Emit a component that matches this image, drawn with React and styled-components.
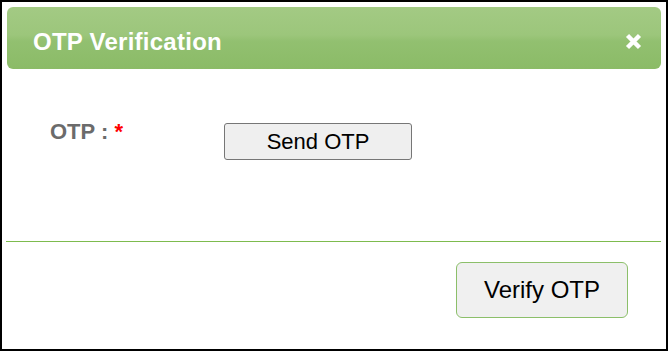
import styled, { createGlobalStyle } from "styled-components";

const GlobalStyle = createGlobalStyle`
    html, body {
        margin: 0;
        padding: 0;
        background: #ffffff;
    }
    body {
        font-family: "Liberation Sans", Arial, sans-serif;
    }
`

const CloseIcon = () => (
    <svg width="17" height="17" viewBox="0 0 17 17">
        <path d="M2.5 2.5 L14.5 14.5 M14.5 2.5 L2.5 14.5" stroke="#ffffff" strokeWidth="4.4" strokeLinecap="butt" />
    </svg>
);

const App = () => {
    return (
        <>
            <GlobalStyle />
            <Dialog>
                <Header>
                    <Title>OTP Verification</Title>
                    <CloseBtn aria-label="close">
                        <CloseIcon />
                    </CloseBtn>
                </Header>

                <Body>
                    <Row>
                        <Label>
                            OTP : <Required>*</Required>
                        </Label>
                        <SendBtn>Send OTP</SendBtn>
                    </Row>
                </Body>

                <Footer>
                    <VerifyBtn>Verify OTP</VerifyBtn>
                </Footer>
            </Dialog>
        </>
    );
}

const Dialog = styled.div`
    width: 668px;
    height: 351px;
    box-sizing: border-box;
    border: 2px solid #000000;
    padding: 5px 5px 0 4px;
    background: #ffffff;
    display: flex;
    flex-direction: column;
`

const Header = styled.div`
    height: 62px;
    margin: 0 0 0 1px;
    border-radius: 6px;
    background: linear-gradient(to bottom, #a3ca84 0%, #9cc67b 45%, #92c070 55%, #8bbb67 100%);
    display: flex;
    align-items: center;
    justify-content: space-between;
    padding: 0 19px 0 26px;
    flex-shrink: 0;
`

const Title = styled.h2`
    margin: 0;
    color: #ffffff;
    font-size: 24px;
    font-weight: bold;
    letter-spacing: 0.25px;
    line-height: 1;
    padding-top: 8px;
`

const CloseBtn = styled.button`
    border: none;
    background: transparent;
    padding: 0;
    display: flex;
    align-items: center;
    cursor: pointer;
    margin-top: 6px;
`

const Body = styled.div`
    height: 172px;
    flex-shrink: 0;
    border-bottom: 1px solid #7dbb4e;
`

const Row = styled.div`
    display: grid;
    grid-template-columns: 174px auto;
    align-items: start;
    padding: 54px 0 0 44px;
`

const Label = styled.label`
    color: #6b6b6b;
    font-size: 22px;
    font-weight: bold;
    line-height: 24px;
    margin-top: -3px;
`

const Required = styled.span`
    color: #ff0000;
`

const SendBtn = styled.button`
    width: 188px;
    height: 37px;
    box-sizing: border-box;
    background: #efefef;
    border: 1px solid #767676;
    border-radius: 3px;
    font-family: "Liberation Sans", Arial, sans-serif;
    font-size: 22px;
    color: #000000;
    padding: 0;
    cursor: pointer;
`

const Footer = styled.div`
    display: flex;
    justify-content: flex-end;
    padding: 20px 33px 0 0;
`

const VerifyBtn = styled.button`
    width: 172px;
    height: 56px;
    box-sizing: border-box;
    background: #f0f0f0;
    border: 1px solid #8cbf6a;
    border-radius: 6px;
    font-family: "Liberation Sans", Arial, sans-serif;
    font-size: 24px;
    color: #000000;
    padding: 0;
    cursor: pointer;
`

export default App;
